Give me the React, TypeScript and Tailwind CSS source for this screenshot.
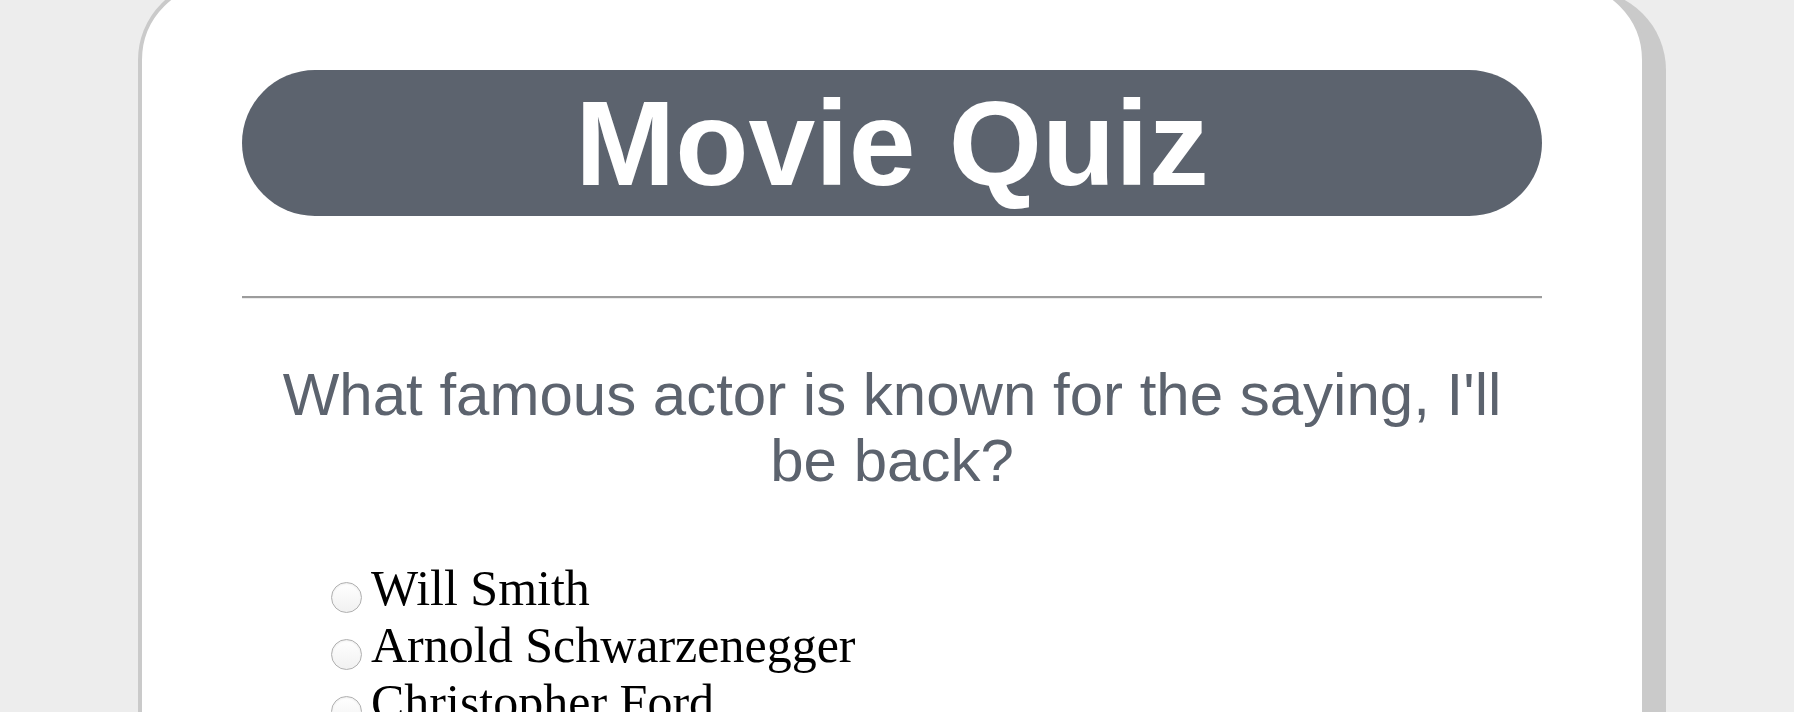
import React from 'react';

const options = ['Will Smith', 'Arnold Schwarzenegger', 'Christopher Ford', 'Tom Cruise'];

export default function App() {
  return (
    <div className="h-[712px] w-full overflow-hidden bg-[#ededed]">
      {/* Card */}
      <div className="ml-[138px] mt-[-20px] w-[1508px] rounded-[80px] border-4 border-[#cacaca] bg-white px-[100px] pt-[86px] pb-[80px] shadow-[20px_10px_0_#cacaca]">
        {/* Title pill */}
        <h1 className="flex h-[146px] items-center justify-center rounded-full bg-[#5c636e] font-['Liberation_Sans',Arial,sans-serif] text-[120px] font-bold leading-[138px] text-white">
          Movie Quiz
        </h1>

        <div className="mt-[80px] border-t-2 border-b border-t-[#9c9c9c] border-b-[#ececec]" />

        {/* Question */}
        <h2 className="mt-[63px] px-[20px] text-center font-['Liberation_Sans',Arial,sans-serif] text-[60px] font-normal leading-[66px] text-[#5c636e]">
          What famous actor is known for the saying, I'll be back?
        </h2>

        {/* Answers */}
        <ul className="mt-[66px] pl-[80px] font-['Liberation_Serif','Times_New_Roman',serif] text-[50px] leading-[57px] text-black">
          {options.map((o) => (
            <li key={o} className="flex h-[57px] items-start">
              <span className="ml-[9px] mt-[22px] h-[31px] w-[31px] shrink-0 rounded-full border border-[#b0b0b0] bg-linear-to-b from-white to-[#f1f1f1] shadow-[inset_0_1px_2px_rgba(0,0,0,0.08)]" />
              <span className="ml-[9px]">{o}</span>
            </li>
          ))}
        </ul>
      </div>
    </div>
  );
}
